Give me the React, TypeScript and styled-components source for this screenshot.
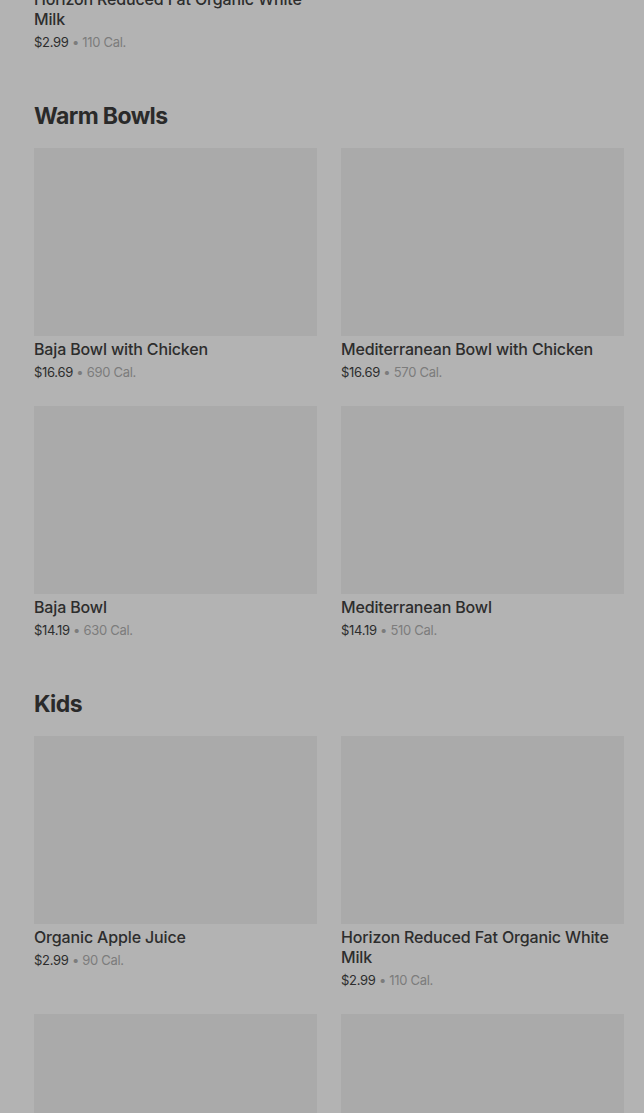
import styled, { createGlobalStyle } from "styled-components";

const GlobalStyle = createGlobalStyle`
  html, body {
    margin: 0;
    padding: 0;
    background: #b3b3b3;
    overflow: hidden;
  }
  body {
    font-family: Inter, "Liberation Sans", Arial, sans-serif;
    -webkit-font-smoothing: antialiased;
  }
`;

type Item = { name: string; price: string; cal: string };

const sections: { title?: string; items: Item[] }[] = [
  {
    items: [{ name: "Horizon Reduced Fat Organic White Milk", price: "$2.99", cal: "110 Cal." }],
  },
  {
    title: "Warm Bowls",
    items: [
      { name: "Baja Bowl with Chicken", price: "$16.69", cal: "690 Cal." },
      { name: "Mediterranean Bowl with Chicken", price: "$16.69", cal: "570 Cal." },
      { name: "Baja Bowl", price: "$14.19", cal: "630 Cal." },
      { name: "Mediterranean Bowl", price: "$14.19", cal: "510 Cal." },
    ],
  },
  {
    title: "Kids",
    items: [
      { name: "Organic Apple Juice", price: "$2.99", cal: "90 Cal." },
      { name: "Horizon Reduced Fat Organic White Milk", price: "$2.99", cal: "110 Cal." },
      { name: "", price: "", cal: "" },
      { name: "", price: "", cal: "" },
    ],
  },
];

const Page = styled.main`
  min-height: 100vh;
  background: #b3b3b3;
  padding: 0 20px 0 34px;
  box-sizing: border-box;
`;

const Section = styled.section<{ $scrolled?: boolean }>`
  margin-top: ${(p) => (p.$scrolled ? "-202px" : "0")};
  padding-top: ${(p) => (p.$scrolled ? "0" : "51px")};
`;

const Heading = styled.h2`
  margin: 0 0 18px;
  font-family: Inter, "Liberation Sans", Arial, sans-serif;
  font-size: 23px;
  line-height: 28px;
  font-weight: 700;
  letter-spacing: -0.6px;
  color: #2a2a2a;
`;

const Grid = styled.div`
  display: grid;
  grid-template-columns: 1fr 1fr;
  column-gap: 24px;
  row-gap: 25px;
`;

const Card = styled.div`
  display: flex;
  flex-direction: column;
`;

const Photo = styled.div`
  height: 188px;
  background: #aaaaaa;
`;

const Name = styled.div`
  margin-top: 3px;
  font-size: 16px;
  line-height: 20px;
  font-weight: 500;
  color: #2d2d2d;
  letter-spacing: -0.15px;
`;

const Meta = styled.div`
  margin-top: 4px;
  font-size: 13px;
  line-height: 18px;
  color: #2d2d2d;
  letter-spacing: -0.3px;
`;

const Cal = styled.span`
  color: #7c7c7c;
`;

export default function App() {
  return (
    <>
      <GlobalStyle />
      <Page>
        {sections.map((s, i) => (
          <Section key={i} $scrolled={!s.title}>
            {s.title && <Heading>{s.title}</Heading>}
            <Grid>
              {s.items.map((it, j) => (
                <Card key={j}>
                  <Photo />
                  {it.name && <Name>{it.name}</Name>}
                  {it.price && (
                    <Meta>
                      {it.price}
                      <Cal> • {it.cal}</Cal>
                    </Meta>
                  )}
                </Card>
              ))}
            </Grid>
          </Section>
        ))}
      </Page>
    </>
  );
}
